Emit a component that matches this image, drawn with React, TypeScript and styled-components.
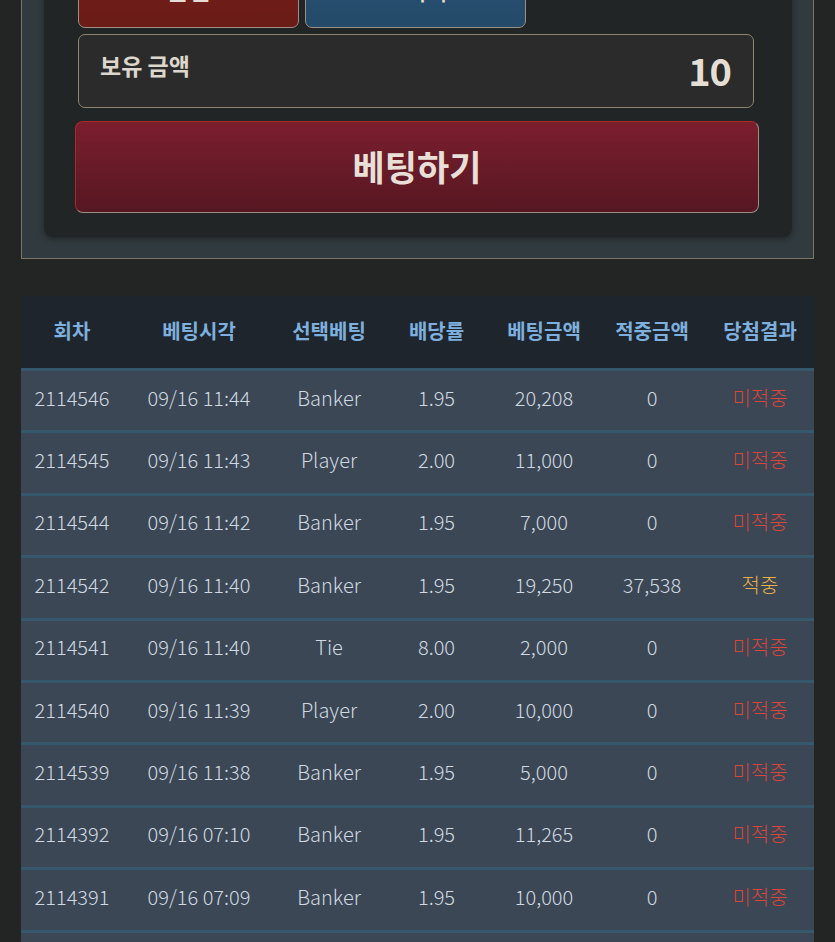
import styled, { createGlobalStyle } from 'styled-components';

const GlobalStyle = createGlobalStyle`
  html, body {
    margin: 0;
    padding: 0;
    background: #222524;
  }
  body {
    font-family: 'Noto Sans CJK KR', 'Noto Sans', sans-serif;
    color: #e5ddd3;
  }
  * { box-sizing: border-box; }
`;

type Result = 'win' | 'lose';

interface BetRow {
  round: string;
  time: string;
  pick: string;
  odds: string;
  amount: string;
  payout: string;
  result: Result;
}

const ROWS: BetRow[] = [
  { round: '2114546', time: '09/16 11:44', pick: 'Banker', odds: '1.95', amount: '20,208', payout: '0', result: 'lose' },
  { round: '2114545', time: '09/16 11:43', pick: 'Player', odds: '2.00', amount: '11,000', payout: '0', result: 'lose' },
  { round: '2114544', time: '09/16 11:42', pick: 'Banker', odds: '1.95', amount: '7,000', payout: '0', result: 'lose' },
  { round: '2114542', time: '09/16 11:40', pick: 'Banker', odds: '1.95', amount: '19,250', payout: '37,538', result: 'win' },
  { round: '2114541', time: '09/16 11:40', pick: 'Tie', odds: '8.00', amount: '2,000', payout: '0', result: 'lose' },
  { round: '2114540', time: '09/16 11:39', pick: 'Player', odds: '2.00', amount: '10,000', payout: '0', result: 'lose' },
  { round: '2114539', time: '09/16 11:38', pick: 'Banker', odds: '1.95', amount: '5,000', payout: '0', result: 'lose' },
  { round: '2114392', time: '09/16 07:10', pick: 'Banker', odds: '1.95', amount: '11,265', payout: '0', result: 'lose' },
  { round: '2114391', time: '09/16 07:09', pick: 'Banker', odds: '1.95', amount: '10,000', payout: '0', result: 'lose' },
  { round: '2114390', time: '09/16 07:08', pick: 'Player', odds: '2.00', amount: '10,000', payout: '0', result: 'lose' }
];

const HEADERS = ['회차', '베팅시각', '선택베팅', '배당률', '베팅금액', '적중금액', '당첨결과'];

const COLUMNS = '102px 152px 108px 107px 108px 108px 108px';

export default function App() {
  return (
    <>
      <GlobalStyle />
      <Page>
        <Frame>
          <Card>
            <QuickRow>
              <QuickButton tone="red">올인</QuickButton>
              <QuickButton tone="blue">초기화</QuickButton>
            </QuickRow>
            <BalanceBox>
              <BalanceLabel>보유 금액</BalanceLabel>
              <BalanceValue>10</BalanceValue>
            </BalanceBox>
            <BetButton>베팅하기</BetButton>
          </Card>
        </Frame>

        <Table>
          <HeadRow>
            {HEADERS.map((h) => (
              <HeadCell key={h}>{h}</HeadCell>
            ))}
          </HeadRow>
          {ROWS.map((r) => (
            <Row key={r.round}>
              <Cell>{r.round}</Cell>
              <Cell>{r.time}</Cell>
              <Cell>{r.pick}</Cell>
              <Cell>{r.odds}</Cell>
              <Cell>{r.amount}</Cell>
              <Cell>{r.payout}</Cell>
              <ResultCell result={r.result}>{r.result === 'win' ? '적중' : '미적중'}</ResultCell>
            </Row>
          ))}
        </Table>
      </Page>
    </>
  );
}

const Page = styled.div`
  padding: 0 21px 40px;
  overflow: hidden;
`;

const Frame = styled.div`
  margin-top: -61px;
  border: 1px solid #7d7466;
  background: #313a3e;
  padding: 0 21px 21px 22px;
`;

const Card = styled.div`
  background: #222526;
  border-radius: 0 0 9px 9px;
  box-shadow: 0 2px 6px rgba(0, 0, 0, 0.35);
  padding: 18px 38px 24px 34px;
  display: flex;
  flex-direction: column;
`;

const QuickRow = styled.div`
  display: flex;
  gap: 6px;
`;

const QuickButton = styled.button<{ tone: 'red' | 'blue' }>`
  width: 221px;
  height: 70px;
  border-radius: 7px;
  border: 1px solid #9a8f80;
  background: ${(p) =>
    p.tone === 'red'
      ? 'linear-gradient(#741e1a, #6b1c17)'
      : 'linear-gradient(#2a5274, #244a69)'};
  color: #e5ddd3;
  font-family: inherit;
  font-size: 24px;
  font-weight: 500;
  padding: 0 0 8px;
`;

const BalanceBox = styled.div`
  margin-top: 6px;
  height: 74px;
  border: 1px solid #8e8474;
  border-radius: 7px;
  background: #2a2b2a;
  display: flex;
  align-items: center;
  justify-content: space-between;
  padding: 0 22px 4px 21px;
`;

const BalanceLabel = styled.span`
  font-size: 23px;
  font-weight: 700;
  color: #dcd6cc;
  margin-top: -8px;
`;

const BalanceValue = styled.span`
  font-size: 38px;
  font-weight: 700;
  color: #e4ded4;
  letter-spacing: -1px;
`;

const BetButton = styled.button`
  margin: 13px -5px 0 -3px;
  height: 92px;
  border-radius: 8px;
  border: 1px solid;
  border-color: #a82a2a #9a8f80 #9a8f80 #a82a2a;
  background: linear-gradient(#7b1e2e, #561722);
  color: #e8e0d8;
  font-family: inherit;
  font-size: 35px;
  font-weight: 700;
  padding: 0 0 4px;
`;

const Table = styled.div`
  margin-top: 37px;
  display: flex;
  flex-direction: column;
`;

const HeadRow = styled.div`
  display: grid;
  grid-template-columns: ${COLUMNS};
  height: 72px;
  background: #1f252d;
  align-items: center;
`;

const HeadCell = styled.div`
  text-align: center;
  font-size: 20px;
  font-weight: 700;
  color: #7db0de;
  white-space: nowrap;
  padding-bottom: 4px;
`;

const Row = styled.div`
  display: grid;
  grid-template-columns: ${COLUMNS};
  height: 62.4px;
  background: #3b4754;
  border-top: 3px solid #36586c;
  align-items: center;
  &:first-of-type {
    border-top-color: #405566;
  }
`;

const Cell = styled.div`
  text-align: center;
  font-size: 20px;
  font-weight: 300;
  color: #d0d9e2;
  white-space: nowrap;
  padding-bottom: 7px;
`;

const ResultCell = styled(Cell)<{ result: Result }>`
  color: ${(p) => (p.result === 'win' ? '#e8ae48' : '#d9453b')};
`;
